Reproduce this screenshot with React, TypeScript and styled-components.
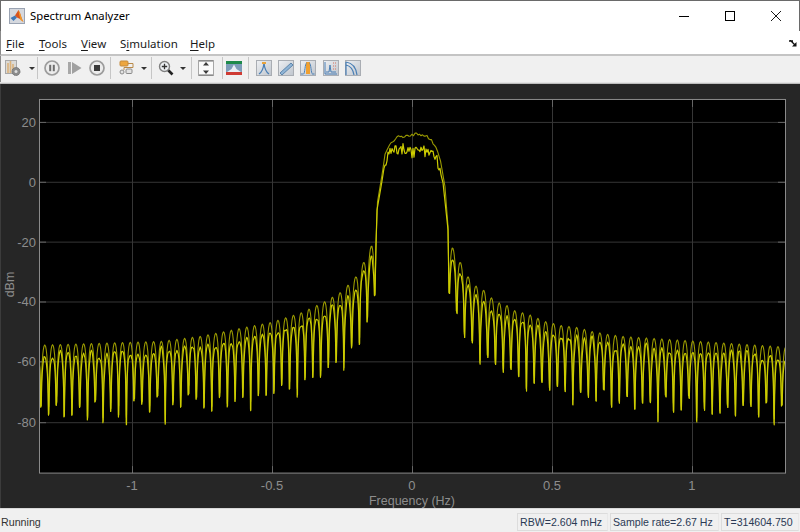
import React from "react"
import styled, { createGlobalStyle } from "styled-components"

const UI_FONT = `"Noto Sans", "Open Sans", sans-serif`
const PLOT_FONT = `"Liberation Sans", Arial, sans-serif`

const GlobalStyle = createGlobalStyle`
	html, body {
		margin: 0;
		padding: 0;
		background: #f0f0f0;
	}
`

const WindowElement = styled.div`
	width: 800px;
	height: 532px;
	display: flex;
	flex-direction: column;
	overflow: hidden;
	background: #f0f0f0;
`

const TitleBarElement = styled.div`
	height: 31px;
	box-sizing: border-box;
	flex: none;
	display: flex;
	align-items: center;
	background: #fff;
	border: 1px solid #6a6a6a;
	border-bottom: none;
	padding-left: 8px;
`

const TitleTextElement = styled.span`
	margin: 0 0 2px 5px;
	flex: 1;
	font-family: ${UI_FONT};
	font-size: 11.3px;
	color: #000;
`

const WindowButtonElement = styled.div`
	width: 46px;
	height: 30px;
	display: flex;
	align-items: center;
	justify-content: center;
`

const MenuBarElement = styled.div`
	height: 25px;
	box-sizing: border-box;
	flex: none;
	display: flex;
	align-items: center;
	background: #fff;
	border-left: 1px solid #8a8a8a;
	border-bottom: 2px solid #c4c4c4;
	padding: 1px 3px 0 5px;
`

const MenuItemElement = styled.span<{ $width: number }>`
	width: ${props => props.$width}px;
	font-family: ${UI_FONT};
	font-size: 11.5px;
	color: #1a1a1a;

	u {
		text-underline-offset: 2px;
	}
`

const MenuSpacerElement = styled.div`
	flex: 1;
`

const ToolbarElement = styled.div`
	height: 26px;
	box-sizing: border-box;
	flex: none;
	display: flex;
	align-items: center;
	padding-bottom: 2px;
	background: #f0f0f0;
	border-left: 1px solid #8a8a8a;
`

const ToolGroupElement = styled.div<{ $left: number, $right: number, $gap?: number, $open?: boolean }>`
	height: 22px;
	box-sizing: content-box;
	display: flex;
	align-items: center;
	gap: ${props => props.$gap ?? 6}px;
	padding: 0 ${props => props.$right}px 0 ${props => props.$left}px;
	border-right: ${props => props.$open ? "none" : "1px solid #c6c6c6"};
`

const DropArrowElement = styled.span`
	width: 0;
	height: 0;
	margin-left: 1px;
	border-left: 3px solid transparent;
	border-right: 3px solid transparent;
	border-top: 3px solid #333;
`

const ToolbarRuleElement = styled.div`
	height: 2px;
	flex: none;
	background: #bdbdbd;
	border-top: 1px solid #e2e2e2;
	box-sizing: border-box;
`

const PlotPanelElement = styled.div`
	flex: 1;
	min-height: 0;
	box-sizing: border-box;
	background: #262626;
	border-left: 1px solid #3c3c3c;
`

const PlotSvgElement = styled.svg`
	display: block;
	width: 799px;
	height: 100%;
`

const AxisTextElement = styled.text<{ $size?: number }>`
	font-family: ${PLOT_FONT};
	font-size: ${props => props.$size ?? 13}px;
	fill: #8d8d8d;
`

const StatusBarElement = styled.div`
	height: 24px;
	box-sizing: border-box;
	flex: none;
	display: flex;
	align-items: flex-end;
	gap: 2px;
	background: #f0f0f0;
	border-top: 1px solid #d8d8d8;
	padding: 0 1px 1px 1px;
`

const StatusTextElement = styled.span`
	flex: 1;
	align-self: center;
	margin-top: 3px;
	font-family: ${PLOT_FONT};
	font-size: 10.7px;
	color: #333;
`

const StatusCellElement = styled.span<{ $width: number }>`
	width: ${props => props.$width}px;
	height: 18px;
	box-sizing: border-box;
	padding-left: 2px;
	border: 1px solid #dcdcdc;
	border-right-color: #e8e8e8;
	font-family: ${PLOT_FONT};
	font-size: 10.6px;
	line-height: 16px;
	white-space: nowrap;
	color: #2b3a55;
`

const IconElement = styled.svg`
	display: block;
	flex: none;
	width: 16px;
	height: 16px;
`

// plot mapping, in window pixels
const PLOT = { left: 39, right: 785, top: 100, bottom: 474 }
const X_TICKS = [
	{ label: "-1", x: 132 },
	{ label: "-0.5", x: 272 },
	{ label: "0", x: 412 },
	{ label: "0.5", x: 552 },
	{ label: "1", x: 692 },
]
const Y_TICKS = [
	{ label: "20", y: 122 },
	{ label: "0", y: 182 },
	{ label: "-20", y: 242 },
	{ label: "-40", y: 302 },
	{ label: "-60", y: 362 },
	{ label: "-80", y: 423 },
]

const LOBE_STEP_LEFT = 7.77
const LOBE_STEP_RIGHT = 7.74
const FIRST_NULL_LEFT = 375
const FIRST_NULL_RIGHT = 449

const LEFT_NULLS = [
	295, 322, 345, 348, 371, 363, 368, 378, 378, 380, 398, 390, 386, 394, 396, 396, 412, 398, 402, 408, 398, 412, 409,
	400, 395, 408, 405, 427, 397, 413, 405, 401, 427, 418, 412, 424, 402, 421, 408, 416, 418, 406, 416, 408, 400,
]
const RIGHT_NULLS = [
	293, 313, 338, 343, 365, 358, 365, 373, 370, 377, 392, 384, 383, 391, 387, 392, 406, 393, 398, 402, 390, 408, 404,
	397, 410, 404, 403, 423, 397, 413, 411, 398, 423, 411, 415, 414, 408, 417, 406, 407, 418, 403, 426, 406, 400,
]

type Point = [number, number]

const PEAK_ENVELOPE: Point[] = [
	[30, 346], [160, 342], [200, 337], [240, 329], [271, 323], [302, 313], [325, 302], [342, 292], [356, 277], [364, 262], [372, 245],
	[452, 247], [460, 262], [468, 277], [475, 286], [483, 290], [491, 298], [498, 303], [507, 306], [514, 311], [529, 315],
	[545, 322], [561, 326], [577, 328], [592, 332], [608, 335], [623, 337], [700, 342], [790, 348],
]

const MAIN_UPPER: Point[] = [
	[375, 293], [376.7, 207], [381.7, 177], [385, 155], [390, 143], [398, 137], [407, 136], [417, 134], [427, 136], [435, 145], [440, 158], [445, 187], [448, 227], [449, 292],
]
const MAIN_LOWER: Point[] = [
	[375, 295], [376.7, 212], [381.7, 183], [385, 162], [390, 153], [403, 149], [413, 153], [427, 151], [437, 159], [443, 183], [448, 230], [449, 293],
]

function interpolate(table: Point[], x: number) {
	if (x <= table[0][0]) return table[0][1]
	for (let i = 1; i < table.length; i++) {
		if (x <= table[i][0]) {
			const [x0, y0] = table[i - 1]
			const [x1, y1] = table[i]
			return y0 + (y1 - y0) * (x - x0) / (x1 - x0)
		}
	}
	return table[table.length - 1][1]
}

function createRandom(seed: number) {
	let state = seed
	return () => {
		state = (state * 16807) % 2147483647
		return state / 2147483647
	}
}

const LOBE_SAMPLES = [0.02, 0.05, 0.08, 0.12, 0.17, 0.24, 0.32, 0.4, 0.5, 0.6, 0.68, 0.76, 0.83, 0.88, 0.92, 0.95, 0.98]

function lobePoints(x0: number, x1: number, null0: number, null1: number, isLower: boolean, random: () => number) {
	const points: Point[] = []
	const drop = isLower ? 7 + random() * 6 : 0
	const skew = isLower ? (random() - 0.5) * 6 : 0
	for (const t of LOBE_SAMPLES) {
		const x = x0 + (x1 - x0) * t
		const nullY = null0 + (null1 - null0) * t
		const db = 20 * Math.log10(Math.abs(Math.cos(Math.PI * (t - 0.5))))
		const bump = isLower ? Math.sin(t * Math.PI * 3) * skew + (random() - 0.5) * 2 : 0
		points.push([x, Math.min(nullY, interpolate(PEAK_ENVELOPE, x) + drop - db * 3.01 + bump)])
	}
	return points
}

function buildTrace(isLower: boolean, seed: number) {
	const random = createRandom(seed)
	const points: Point[] = []
	const nullOffset = () => isLower ? random() * 3 : 2 + random() * 10

	// left side lobes, outermost first
	for (let k = LEFT_NULLS.length - 1; k > 0; k--) {
		const null0 = LEFT_NULLS[k] - nullOffset()
		const x0 = FIRST_NULL_LEFT - k * LOBE_STEP_LEFT
		points.push([x0, null0])
		points.push(...lobePoints(x0, x0 + LOBE_STEP_LEFT, null0, LEFT_NULLS[k - 1], isLower, random))
	}

	// main lobe
	const table = isLower ? MAIN_LOWER : MAIN_UPPER
	points.push([FIRST_NULL_LEFT, table[0][1]])
	for (let x = FIRST_NULL_LEFT + 1; x < FIRST_NULL_RIGHT; x += isLower ? 1 : 1.5) {
		const isTop = x > 384 && x < 441
		const noise = isTop ? (random() - 0.5) * (isLower ? 11 : 2.6) : 0
		points.push([x, interpolate(table, x) + noise])
	}
	points.push([FIRST_NULL_RIGHT, table[table.length - 1][1]])

	// right side lobes
	for (let j = 0; j < RIGHT_NULLS.length - 1; j++) {
		const x0 = FIRST_NULL_RIGHT + j * LOBE_STEP_RIGHT
		const null1 = RIGHT_NULLS[j + 1] - nullOffset()
		points.push(...lobePoints(x0, x0 + LOBE_STEP_RIGHT, RIGHT_NULLS[j], null1, isLower, random))
		points.push([x0 + LOBE_STEP_RIGHT, null1])
	}

	return points.map(([x, y], index) => `${index === 0 ? "M" : "L"}${x.toFixed(2)} ${y.toFixed(2)}`).join("")
}

const UPPER_TRACE = buildTrace(false, 4711)
const LOWER_TRACE = buildTrace(true, 90210)

function MatlabLogo() {
	return (
		<IconElement viewBox="0 0 16 16">
			<rect x="0" y="0" width="16" height="16" fill="#d5d8de" />
			<rect x="0.5" y="0.5" width="15" height="15" fill="none" stroke="#9aa3b2" />
			<path d="M1.5 10 L6 7.5 L8 9.5 L4.5 13 Z" fill="#3f78b8" />
			<path d="M6 7.5 L9.5 2 L11 5 L13 11 L14.5 14 L11 11 L8 9.5 Z" fill="#d9541e" />
			<path d="M9.5 2 L11 5 L13 11 L14.5 14 L11.5 12 L10 6 Z" fill="#f09a2a" />
		</IconElement>
	)
}

function ScopeSettingsIcon() {
	return (
		<IconElement viewBox="0 0 16 16">
			<rect x="0.5" y="0.5" width="11" height="13" fill="#dcdad6" stroke="#a8a8a8" />
			<path d="M3 3 V13 M5.5 1 V13 M8 4 V10" stroke="#dbb27c" strokeWidth="1.6" />
			<circle cx="11" cy="11.5" r="4" fill="#8b8b8b" stroke="#707070" strokeDasharray="1.5 0.7" />
			<circle cx="11" cy="11.5" r="1.5" fill="#dedede" />
		</IconElement>
	)
}

function PauseIcon() {
	return (
		<IconElement viewBox="0 0 16 16">
			<circle cx="8" cy="8" r="7" fill="#ececec" stroke="#9c9c9c" strokeWidth="1.7" />
			<rect x="5.2" y="4.8" width="2" height="6.4" fill="#6e6e6e" />
			<rect x="8.8" y="4.8" width="2" height="6.4" fill="#6e6e6e" />
		</IconElement>
	)
}

function PlayIcon() {
	return (
		<IconElement viewBox="0 0 16 16">
			<rect x="1" y="2" width="3" height="12" fill="#a8a8a8" />
			<path d="M5 2 L14.5 8 L5 14 Z" fill="#a0a0a0" />
		</IconElement>
	)
}

function StopIcon() {
	return (
		<IconElement viewBox="0 0 16 16">
			<circle cx="8" cy="8" r="7" fill="#ececec" stroke="#9c9c9c" strokeWidth="1.7" />
			<rect x="5" y="5" width="6" height="6" fill="#3a3a3a" />
		</IconElement>
	)
}

function BlockIcon() {
	return (
		<IconElement viewBox="0 0 16 16">
			<rect x="1" y="1" width="8" height="5" rx="1" fill="#eda63f" stroke="#c48a3c" />
			<path d="M9 3.5 H14 V7.5 H5 V10" fill="none" stroke="#b98a4a" />
			<rect x="7" y="9" width="6" height="4.5" rx="1" fill="#e3e3e3" stroke="#8a8a8a" />
			<circle cx="3" cy="12" r="2" fill="#e3e3e3" stroke="#8a8a8a" />
		</IconElement>
	)
}

function ZoomIcon() {
	return (
		<IconElement viewBox="0 0 16 16">
			<path d="M9.5 9.5 L14.5 14.5" stroke="#222" strokeWidth="2.6" />
			<circle cx="6.5" cy="6.5" r="5" fill="#eef1f4" stroke="#808080" strokeWidth="1.4" />
			<path d="M3.8 6.5 H9.2 M6.5 3.8 V9.2" stroke="#333" strokeWidth="1.3" />
		</IconElement>
	)
}

function ScaleIcon() {
	return (
		<IconElement viewBox="0 0 16 16">
			<rect x="0.5" y="0.5" width="15" height="15" fill="#fafafa" stroke="#a6a6a6" />
			<path d="M1 1 H15 M1 15 H15" stroke="#707070" />
			<path d="M8 2 L11 5.5 H5 Z M8 14 L5 10.5 H11 Z" fill="#3a3a3a" />
		</IconElement>
	)
}

function LegendColorIcon() {
	return (
		<IconElement viewBox="0 0 16 16">
			<rect x="0" y="1" width="16" height="4" fill="#1d8a4a" />
			<rect x="0" y="4" width="16" height="8" fill="#7c9cb8" />
			<path d="M1 12 L5.5 9 L8 4.5 L10.5 9 L15 12 Z" fill="#e8eef4" />
			<rect x="0" y="12" width="16" height="3" fill="#cf3b34" />
		</IconElement>
	)
}

function PanelIcon(props: { children: React.ReactNode }) {
	return (
		<IconElement viewBox="0 0 16 16">
			<defs>
				<linearGradient id="panelFill" x1="0" y1="0" x2="1" y2="1">
					<stop offset="0" stopColor="#eef0f3" />
					<stop offset="1" stopColor="#bfc5cd" />
				</linearGradient>
			</defs>
			<rect x="0.5" y="0.5" width="15" height="15" fill="url(#panelFill)" stroke="#a9adb3" />
			{props.children}
		</IconElement>
	)
}

function WindowMinimizeIcon() {
	return (
		<svg width="10" height="10" viewBox="0 0 10 10">
			<path d="M0 5.5 H10" stroke="#000" />
		</svg>
	)
}

function WindowMaximizeIcon() {
	return (
		<svg width="10" height="10" viewBox="0 0 10 10">
			<rect x="0.5" y="0.5" width="9" height="9" fill="none" stroke="#000" />
		</svg>
	)
}

function WindowCloseIcon() {
	return (
		<svg width="10" height="10" viewBox="0 0 10 10">
			<path d="M0 0 L10 10 M10 0 L0 10" stroke="#000" strokeWidth="0.9" />
		</svg>
	)
}

function UndockIcon() {
	return (
		<svg width="8" height="7" viewBox="0 0 8 7">
			<path d="M0 1 H4 M1 0 L6.5 5.5" stroke="#111" strokeWidth="1.4" />
			<path d="M3 6.5 H7.5 V2 Z" fill="#111" />
		</svg>
	)
}

function MenuBar() {
	return (
		<MenuBarElement>
			<MenuItemElement $width={33}><u>F</u>ile</MenuItemElement>
			<MenuItemElement $width={42}><u>T</u>ools</MenuItemElement>
			<MenuItemElement $width={39}><u>V</u>iew</MenuItemElement>
			<MenuItemElement $width={70}>S<u>i</u>mulation</MenuItemElement>
			<MenuItemElement $width={40}><u>H</u>elp</MenuItemElement>
			<MenuSpacerElement />
			<UndockIcon />
		</MenuBarElement>
	)
}

function Toolbar() {
	return (
		<ToolbarElement>
			<ToolGroupElement $left={4} $right={2} $gap={7}>
				<ScopeSettingsIcon />
				<DropArrowElement />
			</ToolGroupElement>
			<ToolGroupElement $left={6} $right={5} $gap={6.5}>
				<PauseIcon />
				<PlayIcon />
				<StopIcon />
			</ToolGroupElement>
			<ToolGroupElement $left={8} $right={4} $gap={5}>
				<BlockIcon />
				<DropArrowElement />
			</ToolGroupElement>
			<ToolGroupElement $left={6} $right={5} $gap={5}>
				<ZoomIcon />
				<DropArrowElement />
			</ToolGroupElement>
			<ToolGroupElement $left={6} $right={8}>
				<ScaleIcon />
			</ToolGroupElement>
			<ToolGroupElement $left={3} $right={6}>
				<LegendColorIcon />
			</ToolGroupElement>
			<ToolGroupElement $left={7} $right={0} $gap={6.2} $open>
				<PanelIcon>
					<path d="M8 3 C7.5 8 6 12 3 14 M8 3 C8.5 8 10 12 13 14" fill="none" stroke="#4a7fb5" strokeWidth="1.3" />
					<rect x="6" y="2" width="4" height="2" fill="#e8a33c" />
				</PanelIcon>
				<PanelIcon>
					<path d="M2 13 L13 3 L15 5 L4 15 Z" fill="#8fb4d6" stroke="#5f86ab" />
				</PanelIcon>
				<PanelIcon>
					<rect x="6" y="2" width="4" height="12" fill="#f0a030" />
					<path d="M1 14 H3.5 C5 14 5 3 6.5 3 M14.5 14 H12.5 C11 14 11 3 9.5 3" fill="none" stroke="#4a7fb5" />
				</PanelIcon>
				<PanelIcon>
					<path d="M2 2 V14 H14" fill="none" stroke="#4a7fb5" />
					<path d="M3 12 H6 L7 5 L8 12 H13" fill="none" stroke="#4a7fb5" />
					<path d="M10 3 H14 M10 6 H14 M10 9 H14" stroke="#d9705a" strokeDasharray="1 1" />
				</PanelIcon>
				<PanelIcon>
					<path d="M1 2 C8 3 11 7 12 15 M1 5 C6 6 8 9 9 15 M1 2 V15" fill="none" stroke="#4a7fb5" strokeWidth="1.2" />
				</PanelIcon>
			</ToolGroupElement>
		</ToolbarElement>
	)
}

function Plot() {
	const { left, right, top, bottom } = PLOT

	return (
		<PlotSvgElement viewBox="1 84 799 425" preserveAspectRatio="none">
			<defs>
				<clipPath id="plotClip">
					<rect x={left} y={top} width={right - left} height={bottom - top} />
				</clipPath>
			</defs>
			<rect x={left} y={top} width={right - left} height={bottom - top} fill="#000" />

			{Y_TICKS.map(tick => (
				<g key={tick.label}>
					<path d={`M${left} ${tick.y + 0.5} H${right}`} stroke="#363636" />
					<path d={`M${left} ${tick.y + 0.5} h7 M${right} ${tick.y + 0.5} h-7`} stroke="#666" />
					<AxisTextElement x={left - 3} y={tick.y + 5} textAnchor="end">{tick.label}</AxisTextElement>
				</g>
			))}
			{X_TICKS.map(tick => (
				<g key={tick.label}>
					<path d={`M${tick.x + 0.5} ${top} V${bottom}`} stroke="#363636" />
					<path d={`M${tick.x + 0.5} ${bottom} v-7 M${tick.x + 0.5} ${top} v7`} stroke="#666" />
					<AxisTextElement x={tick.x} y={491} textAnchor="middle">{tick.label}</AxisTextElement>
				</g>
			))}

			<g clipPath="url(#plotClip)" fill="none" strokeLinejoin="round">
				<path d={UPPER_TRACE} stroke="#999900" strokeWidth="1.1" />
				<path d={LOWER_TRACE} stroke="#cccc00" strokeWidth="1.2" />
			</g>

			<rect x={left + 0.5} y={top - 0.5} width={right - left} height={bottom - top + 0.5} fill="none" stroke="#8a8a8a" />

			<AxisTextElement x={412} y={506} textAnchor="middle" $size={12.5}>Frequency (Hz)</AxisTextElement>
			<AxisTextElement x={14} y={285} textAnchor="middle" transform="rotate(-90 14 285)" $size={12.5}>dBm</AxisTextElement>
		</PlotSvgElement>
	)
}

function App() {
	return (
		<WindowElement>
			<GlobalStyle />
			<TitleBarElement>
				<MatlabLogo />
				<TitleTextElement>Spectrum Analyzer</TitleTextElement>
				<WindowButtonElement><WindowMinimizeIcon /></WindowButtonElement>
				<WindowButtonElement><WindowMaximizeIcon /></WindowButtonElement>
				<WindowButtonElement><WindowCloseIcon /></WindowButtonElement>
			</TitleBarElement>
			<MenuBar />
			<Toolbar />
			<ToolbarRuleElement />
			<PlotPanelElement>
				<Plot />
			</PlotPanelElement>
			<StatusBarElement>
				<StatusTextElement>Running</StatusTextElement>
				<StatusCellElement $width={91}>RBW=2.604 mHz</StatusCellElement>
				<StatusCellElement $width={109}>Sample rate=2.67 Hz</StatusCellElement>
				<StatusCellElement $width={78}>T=314604.750</StatusCellElement>
			</StatusBarElement>
		</WindowElement>
	)
}

export default App
